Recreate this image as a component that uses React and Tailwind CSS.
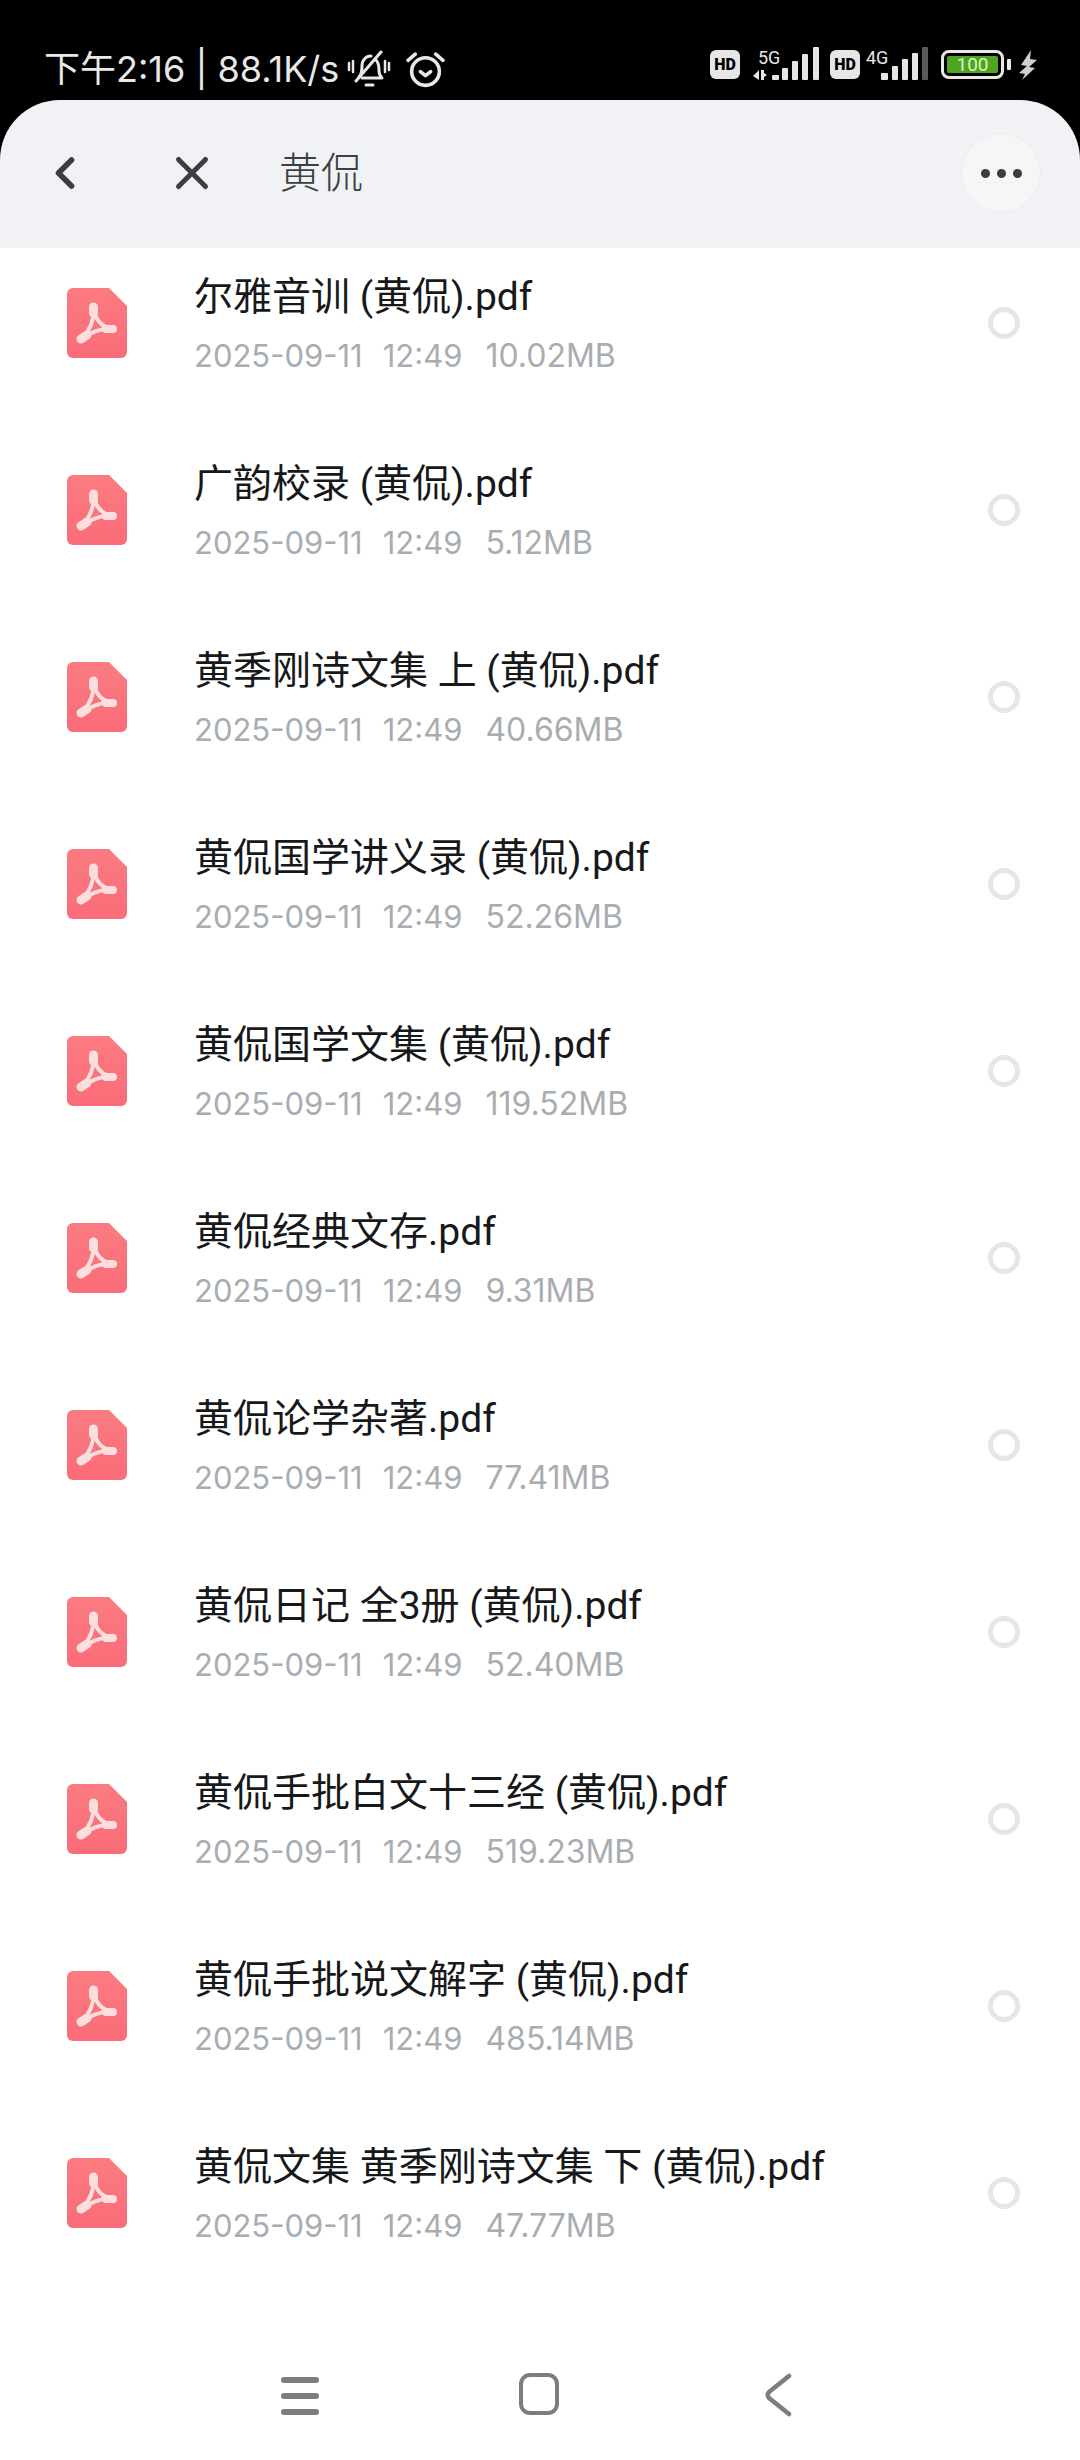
import { ChevronLeft, X } from 'lucide-react';

const files = [
  { name: '尔雅音训 (黄侃).pdf', size: '10.02MB' },
  { name: '广韵校录 (黄侃).pdf', size: '5.12MB' },
  { name: '黄季刚诗文集 上 (黄侃).pdf', size: '40.66MB' },
  { name: '黄侃国学讲义录 (黄侃).pdf', size: '52.26MB' },
  { name: '黄侃国学文集 (黄侃).pdf', size: '119.52MB' },
  { name: '黄侃经典文存.pdf', size: '9.31MB' },
  { name: '黄侃论学杂著.pdf', size: '77.41MB' },
  { name: '黄侃日记 全3册 (黄侃).pdf', size: '52.40MB' },
  { name: '黄侃手批白文十三经 (黄侃).pdf', size: '519.23MB' },
  { name: '黄侃手批说文解字 (黄侃).pdf', size: '485.14MB' },
  { name: '黄侃文集 黄季刚诗文集 下 (黄侃).pdf', size: '47.77MB' },
];

function PdfIcon() {
  return (
    <svg width="60" height="70" viewBox="0 0 60 70" className="shrink-0">
      <defs>
        <linearGradient id="pdfFill" x1="0" y1="0" x2="0" y2="1">
          <stop offset="0" stopColor="#fb7b80" />
          <stop offset="1" stopColor="#fa6c79" />
        </linearGradient>
      </defs>
      <path d="M6 0H42L60 18V64a6 6 0 0 1-6 6H6a6 6 0 0 1-6-6V6a6 6 0 0 1 6-6Z" fill="url(#pdfFill)" />
      <g fill="none" stroke="#fbdedd" strokeLinecap="round">
        <path d="M27 21C27 31 24 41 15 51" strokeWidth="4" />
        <path d="M27 21C28 30 33 38 45 41" strokeWidth="4" />
        <path d="M15 51C24 44 34 40 45 41" strokeWidth="4" />
        <path d="M26.5 19V25" strokeWidth="9" />
        <path d="M14 51L20 47" strokeWidth="9" />
        <path d="M39 41H46" strokeWidth="8" />
      </g>
    </svg>
  );
}

function FileRow({ file }) {
  return (
    <div className="flex h-[187px] items-center pl-[67px] pr-[60px]">
      <PdfIcon />
      <div className="ml-[67px] min-w-0 flex-1 pt-[4px]">
        <p className="text-[39px] leading-[48px] text-[#17181a]">{file.name}</p>
        <p className='mt-[15px] flex font-["Inter"] text-[31px] leading-[40px] text-[#a9adb2]'>
          <span>2025-09-11</span>
          <span className="ml-[20px]">12:49</span>
          <span className="ml-[23px] text-[32px]">{file.size}</span>
        </p>
      </div>
      <span className="h-[32px] w-[32px] shrink-0 rounded-full border-[5px] border-[#e6e6e6] bg-white" />
    </div>
  );
}

function HdBadge() {
  return (
    <span className="flex h-[29px] w-[30px] items-center justify-center rounded-[6px] bg-[#e6e6e6] text-[16px] font-black leading-none text-black">
      HD
    </span>
  );
}

function Signal5G() {
  return (
    <svg width="68" height="38" viewBox="0 0 68 38">
      <text x="5" y="17" fontSize="18" fill="#e6e6e6" fontFamily="Roboto">5G</text>
      <path d="M6 23V33L0 29Z M8 23H11V26L14 28L11 30V33H8Z" fill="#e6e6e6" />
      <rect x="19" y="28" width="7" height="5" rx="1" fill="#e6e6e6" />
      <rect x="29" y="21" width="6" height="12" rx="1" fill="#e6e6e6" />
      <rect x="39" y="14" width="6" height="19" rx="1" fill="#e6e6e6" />
      <rect x="49" y="7" width="6" height="26" rx="1" fill="#e6e6e6" />
      <rect x="60" y="0" width="6" height="33" rx="1" fill="#e6e6e6" />
    </svg>
  );
}

function Signal4G() {
  return (
    <svg width="62" height="38" viewBox="0 0 62 38">
      <text x="0" y="17" fontSize="18" fill="#e6e6e6" fontFamily="Roboto">4G</text>
      <rect x="15" y="26" width="7" height="7" rx="1" fill="#e6e6e6" />
      <rect x="26" y="19" width="6" height="14" rx="1" fill="#e6e6e6" />
      <rect x="36" y="12" width="6" height="21" rx="1" fill="#e6e6e6" />
      <rect x="46" y="6" width="6" height="27" rx="1" fill="#e6e6e6" />
      <rect x="56" y="0" width="6" height="33" rx="1" fill="#5b5b5b" />
    </svg>
  );
}

function StatusBar() {
  return (
    <div className="flex h-[100px] items-start justify-between bg-black pl-[44px] pr-[43px] pt-[48px] text-[#e8e8e8]">
      <div className="flex items-center">
        <span className='font-["Inter","Noto_Sans_CJK_SC",sans-serif] text-[36px] leading-[42px]'>下午2:16 | 88.1K/s</span>
        <svg width="44" height="38" viewBox="0 0 44 38" className="ml-[8px]" fill="none" stroke="#e8e8e8" strokeLinecap="round" strokeLinejoin="round" strokeWidth="3">
          <path d="M12 27c3-3 3-6 3-11 0-6 4-10 9-10M29 10c3 3 3 7 3 11 0 3 1 5 3 7H15" />
          <path d="M34 2L9 31" />
          <path d="M19 35h7" />
          <path d="M2 13v7M6 11v11M38 11v11M42 13v7" strokeWidth="2.5" />
        </svg>
        <svg width="39" height="37" viewBox="0 0 38 36" className="ml-[15px]" fill="none" stroke="#e8e8e8" strokeLinecap="round" strokeLinejoin="round" strokeWidth="3.5">
          <circle cx="19" cy="20" r="13.5" />
          <path d="M14 20l5 4 5-4" />
          <path d="M2 9l7-6M36 9l-7-6" />
        </svg>
      </div>
      <div className="-mt-[1px] flex items-start pt-[3px]">
        <HdBadge />
        <span className="-mt-[3px] ml-[13px]"><Signal5G /></span>
        <span className="ml-[9px]"><HdBadge /></span>
        <span className="-mt-[3px] ml-[6px]"><Signal4G /></span>
        <div className="ml-[13px] flex h-[29px] w-[63px] items-center justify-center rounded-[8px] border-[3px] border-[#e8e8e8] bg-black">
          <span className="flex h-[17px] w-[51px] items-center justify-center rounded-[2px] bg-[#4fa51f] text-[19px] leading-none text-[#d8f2c4]">100</span>
        </div>
        <span className="ml-[3px] mt-[9px] h-[11px] w-[4px] rounded-[1px] bg-[#e8e8e8]" />
        <svg width="18" height="30" viewBox="0 0 18 30" className="ml-[8px]" fill="#cfcfcf">
          <path d="M12 0L2 15l6 1-8 7 6 1-3 6 13-12-6-1 8-7-7-1Z" />
        </svg>
      </div>
    </div>
  );
}

function Header() {
  return (
    <div className="relative z-10 bg-black">
      <div className="flex h-[148px] items-center rounded-t-[60px] bg-[#f1f2f6] pl-[39px] pr-[39px]">
        <ChevronLeft size={52} strokeWidth={2.6} color="#3c3d40" className="-mt-[2px]" />
        <X size={54} strokeWidth={2.2} color="#3c3d40" className="ml-[74px] -mt-[2px]" />
        <span className="ml-[60px] flex-1 text-[42px] font-light leading-[52px] text-[#3c3f44]">黄侃</span>
        <span className="-mt-[2px] flex h-[80px] w-[80px] items-center justify-center gap-[7px] rounded-full border border-[#ececec] bg-[#f6f6f7]">
          <i className="h-[9px] w-[9px] rounded-full bg-[#3c3d40]" />
          <i className="h-[9px] w-[9px] rounded-full bg-[#3c3d40]" />
          <i className="h-[9px] w-[9px] rounded-full bg-[#3c3d40]" />
        </span>
      </div>
    </div>
  );
}

function NavBar() {
  return (
    <div className="flex h-[120px] items-start bg-white pl-[281px] pt-[33px]">
      <div className="mt-[4px] flex w-[38px] flex-col gap-[10px]">
        <i className="h-[6px] rounded-full bg-[#7d7d7d]" />
        <i className="h-[6px] rounded-full bg-[#7d7d7d]" />
        <i className="h-[6px] rounded-full bg-[#7d7d7d]" />
      </div>
      <span className="ml-[200px] h-[42px] w-[40px] rounded-[11px] border-[4px] border-[#7d7d7d]" />
      <svg width="28" height="44" viewBox="0 0 28 44" className="ml-[205px]" fill="none" stroke="#7d7d7d" strokeWidth="4.5" strokeLinecap="round" strokeLinejoin="round">
        <path d="M25 3L5 19q-2.500 3 0 6L25 41" />
      </svg>
    </div>
  );
}

export default function App() {
  return (
    <div className='flex h-[2460px] w-[1080px] flex-col overflow-hidden bg-white font-["Roboto","Noto_Sans_CJK_SC",sans-serif]'>
      <StatusBar />
      <Header />
      <div className="-mt-[19px] flex-1">
        {files.map((file) => (
          <FileRow key={file.name} file={file} />
        ))}
      </div>
      <NavBar />
    </div>
  );
}
